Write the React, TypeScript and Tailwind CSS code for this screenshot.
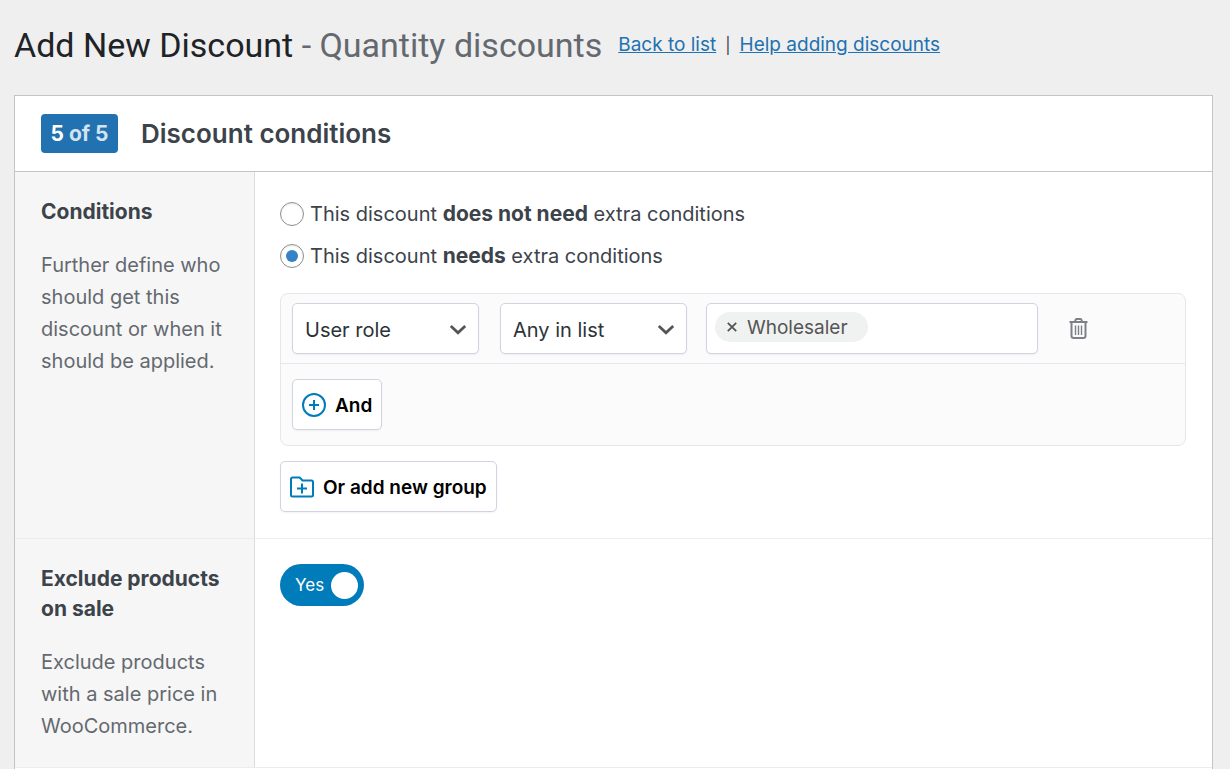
import { ReactNode, useState } from 'react';

interface SettingRowProps {
  title: string;
  description: string;
  children: ReactNode;
}

const SettingRow = ({ title, description, children }: SettingRowProps) => (
  <section className="grid grid-cols-[240px_1fr] border-b border-[#ececec]">
    <div className="bg-[#f6f6f6] border-r border-[#dcdcde] pl-[26px] pr-5 py-[25px]">
      <h3 className="text-[21px] leading-[30px] font-bold text-[#3c434a]">{title}</h3>
      <p className="mt-[22px] text-[20px] leading-8 text-[#646970]">{description}</p>
    </div>
    <div className="pl-[25px] pr-[26px] pb-[26px]">{children}</div>
  </section>
);

interface SelectFieldProps {
  label: string;
  options: string[];
}

const SelectField = ({ label, options }: SelectFieldProps) => (
  <div className="relative w-[187px]">
    <select
      aria-label={label}
      className="w-full h-[51px] appearance-none rounded-[5px] border border-[#d0d3e0] bg-white pl-3 pr-10 pt-0.5 text-[20px] text-[#2c3338] shadow-xs"
    >
      {options.map((option) => (
        <option key={option}>{option}</option>
      ))}
    </select>
    <svg
      className="absolute right-3 top-5 w-[18px] h-3 pointer-events-none"
      viewBox="0 0 18 12"
      fill="none"
      stroke="#555"
      strokeWidth="2.800"
    >
      <path d="M1.800 3 9 9.800 16.200 3" />
    </svg>
  </div>
);

const PlusCircleIcon = () => (
  <svg className="w-6 h-6" viewBox="0 0 24 24" fill="none" stroke="#007cba" strokeWidth="2">
    <circle cx="12" cy="12" r="11" />
    <path d="M12 7v10M7 12h10" />
  </svg>
);

const FolderPlusIcon = () => (
  <svg className="w-6 h-6" viewBox="0 0 24 24" fill="none" stroke="#007cba" strokeWidth="2" strokeLinejoin="round">
    <path d="M1 20V4A1.500 1.500 0 0 1 2.500 2.500h6.500q1 0 1.600.9L12.500 5.500h9A1.500 1.500 0 0 1 23 7v13a1.500 1.500 0 0 1-1.500 1.500h-19A1.500 1.500 0 0 1 1 20z" />
    <path d="M12 8.500v10M7 13.500h10" />
  </svg>
);

const TrashIcon = () => (
  <svg className="w-[19px] h-[22px]" viewBox="0 0 19 22" fill="none" stroke="#7e8087">
    <path d="M0.500 4h18" strokeWidth="2" />
    <path d="M6 4 6.500 1.900Q6.700 1 7.600 1h3.800q.9 0 1.100.9L13 4" strokeWidth="2" />
    <path d="M2.500 4v14q0 2 2.200 2h9.600q2.200 0 2.200-2V4" strokeWidth="2" />
    <path d="M6.500 7.500V17M9.500 7.500V17M12.500 7.500V17" strokeWidth="1.400" />
  </svg>
);

const radioClass =
  "relative appearance-none w-6 h-6 shrink-0 rounded-full border border-[#8c8f94] bg-white shadow-[inset_0_1px_2px_rgba(0,0,0,0.1)] checked:before:content-[''] checked:before:absolute checked:before:inset-[5px] checked:before:rounded-full checked:before:bg-[#3582c4]";

const buttonClass =
  'flex items-center gap-[9px] h-[51px] px-[9px] rounded-[5px] border border-[#d0d3e0] bg-white text-[19px] font-semibold text-black shadow-xs cursor-pointer';

export default function App() {
  const [needsConditions, setNeedsConditions] = useState(true);
  const [excludeSale, setExcludeSale] = useState(true);
  const [roles, setRoles] = useState(['Wholesaler']);

  return (
    <div className="h-screen overflow-hidden bg-[#efefef] pl-[14px] pr-[17px] font-['Inter',sans-serif] text-[#3c434a]">
      {/* Page title */}
      <header className="flex items-center h-[95px] pb-[6px] whitespace-nowrap">
        <h1 className="font-['Roboto',sans-serif] text-[34px] leading-[44px] font-normal text-[#1d2327]">
          Add New Discount <span className="text-[#646970]">- Quantity discounts</span>
        </h1>
        <nav className="ml-4 flex items-center gap-[9px] text-[19px] leading-7">
          <a href="#list" className="text-[#2271b1] underline">Back to list</a>
          <span className="text-base">|</span>
          <a href="#help" className="text-[#2271b1] underline">Help adding discounts</a>
        </nav>
      </header>

      <main className="border border-[#c3c4c7] bg-white pb-6">
        <div className="flex items-center h-[76px] pl-[26px] border-b border-[#c3c4c7]">
          <span className="flex items-center justify-center w-[77px] h-[39px] rounded-[4px] bg-[#2271b1] text-[21px] font-bold text-white">
            <span>
              5 <span className="text-[#d3e3f0]">of 5</span>
            </span>
          </span>
          <h2 className="ml-[23px] text-[26px] font-semibold">Discount conditions</h2>
        </div>

        <SettingRow
          title="Conditions"
          description="Further define who should get this discount or when it should be applied."
        >
          <div className="pt-[27px] flex flex-col gap-3 text-[20px] leading-[30px]">
            <label className="flex items-center gap-[6px]">
              <input
                type="radio"
                name="conditions"
                className={radioClass}
                checked={!needsConditions}
                onChange={() => setNeedsConditions(false)}
              />
              <span>
                This discount <strong className="text-[21px] font-bold">does not need</strong> extra conditions
              </span>
            </label>
            <label className="flex items-center gap-[6px]">
              <input
                type="radio"
                name="conditions"
                className={radioClass}
                checked={needsConditions}
                onChange={() => setNeedsConditions(true)}
              />
              <span>
                This discount <strong className="text-[21px] font-bold">needs</strong> extra conditions
              </span>
            </label>
          </div>

          {/* Condition group */}
          <div className="mt-[22px] rounded-[8px] border border-[#e6e7eb] bg-[#fbfbfb]">
            <div className="flex items-center h-[70px] px-[11px] border-b border-[#e6e7eb]">
              <SelectField label="Condition type" options={['User role', 'User', 'Cart subtotal']} />
              <div className="ml-[21px]">
                <SelectField label="Comparison" options={['Any in list', 'None in list']} />
              </div>
              <div className="ml-[19px] flex items-start w-[332px] h-[51px] pl-2 pt-2 rounded-[5px] border border-[#d0d3e0] bg-white shadow-xs">
                {roles.map((role) => (
                  <span
                    key={role}
                    className="flex items-center h-[30px] pl-3 pr-5 rounded-full bg-[#f0f2f1] text-[19px] text-[#555]"
                  >
                    <button
                      type="button"
                      aria-label={`Remove ${role}`}
                      className="mr-[10px]"
                      onClick={() => setRoles(roles.filter((r) => r !== role))}
                    >
                      <svg className="w-[10px] h-[10px]" viewBox="0 0 10 10" stroke="#555" strokeWidth="1.800">
                        <path d="M.8.8l8.400 8.400M9.200.8.8 9.200" />
                      </svg>
                    </button>
                    <span className="pt-0.5">{role}</span>
                  </span>
                ))}
                <input aria-label="Roles" className="flex-1 min-w-0 h-[30px] bg-transparent outline-none" />
              </div>
              <button type="button" aria-label="Delete condition" className="ml-[31px] cursor-pointer">
                <TrashIcon />
              </button>
            </div>
            <div className="flex px-[11px] py-[15px]">
              <button type="button" className={buttonClass}>
                <PlusCircleIcon />
                <span className="pt-[3px]">And</span>
              </button>
            </div>
          </div>

          <button type="button" className={`mt-[15px] ${buttonClass}`}>
            <FolderPlusIcon />
            <span className="pt-[3px]">Or add new group</span>
          </button>
        </SettingRow>

        <SettingRow
          title="Exclude products on sale"
          description="Exclude products with a sale price in WooCommerce."
        >
          <label
            className={`mt-[25px] flex items-center justify-between w-[84px] h-[42px] pl-[15px] pr-[6px] rounded-full cursor-pointer text-[17px] text-white ${
              excludeSale ? 'bg-[#007cba]' : 'bg-[#8c8f94] flex-row-reverse'
            }`}
          >
            <input
              type="checkbox"
              className="sr-only"
              aria-label="Exclude products on sale"
              checked={excludeSale}
              onChange={() => setExcludeSale(!excludeSale)}
            />
            <span className="pt-0.5">{excludeSale ? 'Yes' : 'No'}</span>
            <span className="w-[27px] h-[27px] rounded-full bg-white"></span>
          </label>
        </SettingRow>
      </main>
    </div>
  );
}
